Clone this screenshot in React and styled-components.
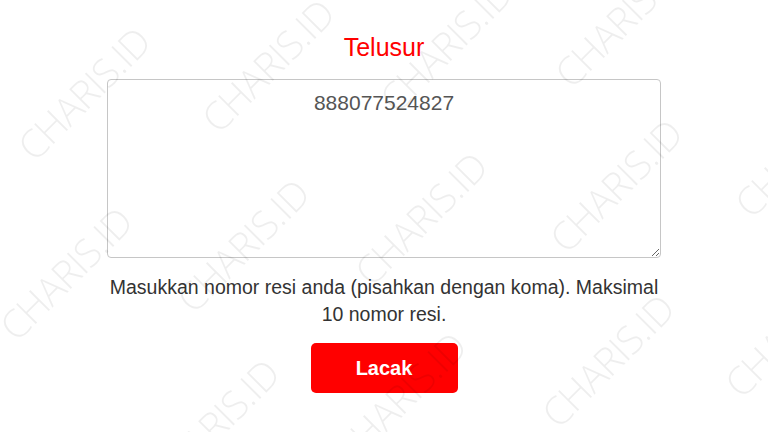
import React from "react";
import styled, { createGlobalStyle } from "styled-components";

const GlobalStyle = createGlobalStyle`
  html, body {
    margin: 0;
    background: #fff;
    font-family: "Liberation Sans", Arial, sans-serif;
  }
`;

const Page = styled.main`
  display: flex;
  flex-direction: column;
  align-items: center;
  padding-top: 33px;
  height: 432px;
  box-sizing: border-box;
`;

const Title = styled.h1`
  margin: 0;
  font-size: 25px;
  line-height: 28px;
  font-weight: 400;
  color: #ff0000;
`;

const ResiBox = styled.textarea`
  display: block;
  box-sizing: border-box;
  width: 554px;
  height: 179px;
  margin-top: 18px;
  padding: 11px 12px;
  border: 1px solid #c6c6c6;
  border-radius: 4px;
  font-family: "Liberation Sans", Arial, sans-serif;
  font-size: 21px;
  line-height: 24px;
  color: #555;
  text-align: center;
  outline: none;
`;

const Hint = styled.p`
  margin: 16px 0 0;
  width: 554px;
  font-size: 19.5px;
  line-height: 27px;
  color: #333;
  text-align: center;
`;

const TrackButton = styled.button`
  margin-top: 15px;
  width: 147px;
  height: 50px;
  border: none;
  border-radius: 5px;
  background: #ff0000;
  color: #fff;
  font-family: "Liberation Sans", Arial, sans-serif;
  font-size: 20px;
  font-weight: 700;
  cursor: pointer;
`;

const Watermarks = styled.div`
  position: fixed;
  inset: 0;
  overflow: hidden;
  pointer-events: none;
  z-index: 2;
`;

const Mark = styled.span`
  position: absolute;
  transform: translate(-50%, -50%) rotate(-45deg);
  font-family: "Open Sans", "DejaVu Sans", sans-serif;
  font-weight: 300;
  font-size: 39px;
  letter-spacing: -1px;
  white-space: nowrap;
  color: rgba(0, 0, 0, 0.065);
`;

// centres of the diagonal "CHARIS.ID" stamps
const marks = [
  [83, 93], [267, 65], [445, 45], [620, 20],
  [65, 273], [242, 245], [420, 218], [615, 185], [800, 150],
  [212, 425], [399, 398], [607, 360], [790, 330],
];

const App = () => {
  return (
    <>
      <GlobalStyle />
      <Page>
        <Title>Telusur</Title>
        <ResiBox defaultValue="888077524827" />
        <Hint>
          Masukkan nomor resi anda (pisahkan dengan koma). Maksimal 10 nomor
          resi.
        </Hint>
        <TrackButton type="button">Lacak</TrackButton>
      </Page>
      <Watermarks>
        {marks.map(([x, y]) => (
          <Mark key={`${x}-${y}`} style={{ left: x, top: y }}>
            CHARIS.ID
          </Mark>
        ))}
      </Watermarks>
    </>
  );
};

export default App;
